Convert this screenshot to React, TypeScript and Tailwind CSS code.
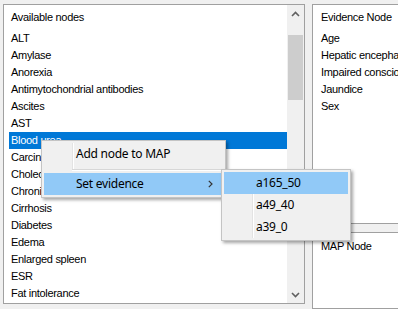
const nodes = [
  "ALT",
  "Amylase",
  "Anorexia",
  "Antimytochondrial antibodies",
  "Ascites",
  "AST",
  "Blood urea",
  "Carcinoma",
  "Cholecystitis",
  "Chronic hepatitis",
  "Cirrhosis",
  "Diabetes",
  "Edema",
  "Enlarged spleen",
  "ESR",
  "Fat intolerance",
];

const evidence = ["Age", "Hepatic encephalopathy", "Impaired consciousness", "Jaundice", "Sex"];

function Chevron({ up }: { up?: boolean }) {
  return (
    <svg width="9" height="6" viewBox="0 0 9 6" className="block">
      <path
        d={up ? "M1 5 L4.5 1.5 L8 5" : "M1 1 L4.5 4.5 L8 1"}
        fill="none"
        stroke="#606060"
        strokeWidth="1.6"
      />
    </svg>
  );
}

export default function App() {
  return (
    <div className="relative w-[398px] h-[309px] overflow-hidden bg-[#f0f0f0] text-black">
      <div className="flex pt-[4px] pl-[3px] gap-[7px] h-full font-['Liberation_Sans',Arial,sans-serif] text-[11px] leading-[17px] tracking-[-0.3px]">
        {/* Left list box */}
        <div className="w-[302px] h-[300px] shrink-0 border border-[#a0a0a0] bg-white flex">
          <div className="flex-1 pl-[5px] overflow-hidden">
            <div className="pt-[4px] pb-[4px] pl-[2px]">Available nodes</div>
            {nodes.map((n) => (
              <div
                key={n}
                className={
                  n === "Blood urea"
                    ? "h-[17px] pl-[2px] bg-[#0078d7] text-white whitespace-nowrap"
                    : "h-[17px] pl-[2px] whitespace-nowrap"
                }
              >
                {n}
              </div>
            ))}
          </div>
          <div className="w-[17px] bg-[#f0f0f0] flex flex-col items-center">
            <div className="h-[17px] w-full flex items-center justify-center">
              <Chevron up />
            </div>
            <div className="h-[13px]" />
            <div className="w-[15px] h-[65px] bg-[#cdcdcd]" />
            <div className="flex-1" />
            <div className="h-[17px] w-full flex items-center justify-center">
              <Chevron />
            </div>
          </div>
        </div>

        {/* Right column */}
        <div className="w-[100px] shrink-0 flex flex-col">
          <div className="h-[220px] border border-[#a0a0a0] bg-white pl-[8px] overflow-hidden">
            <div className="pt-[4px] pb-[4px] whitespace-nowrap">Evidence Node</div>
            {evidence.map((e) => (
              <div key={e} className="h-[17px] whitespace-nowrap">
                {e}
              </div>
            ))}
          </div>
          <div className="mt-[8px] flex-1 border border-[#a0a0a0] bg-white pl-[8px]">
            <div className="pt-[5px] whitespace-nowrap">MAP Node</div>
          </div>
        </div>
      </div>

      {/* Context menu */}
      <div className="absolute left-[41px] top-[140px] w-[185px] border border-[#c4c4c4] bg-[#f0f0f0] p-[2px] shadow-[2px_2px_3px_rgba(0,0,0,0.35)] font-['Noto_Sans',sans-serif] text-[12px] tracking-[-0.25px]">
        <div className="relative h-[22px] flex items-center pl-[32px]">
          <div className="absolute left-[28px] top-0 bottom-0 w-[1px] bg-[#e3e3e3]" />
          <div className="absolute left-[29px] top-0 bottom-0 w-[1px] bg-white" />
          <span>Add node to MAP</span>
        </div>
        <div className="relative h-[8px]">
          <div className="absolute left-[28px] top-0 h-[4px] w-[1px] bg-[#e3e3e3]" />
          <div className="absolute left-[29px] top-0 h-[4px] w-[1px] bg-white" />
          <div className="absolute left-[28px] right-0 top-[4px] h-[1px] bg-[#d7d7d7]" />
          <div className="absolute left-[28px] right-0 top-[5px] h-[1px] bg-white" />
        </div>
        <div className="h-[22px] flex items-center pl-[32px] pr-[10px] bg-[#91c9f7]">
          <span className="flex-1">Set evidence</span>
          <svg width="5" height="8" viewBox="0 0 5 8" className="block">
            <path d="M0.8 0.8 L4 4 L0.8 7.2" fill="none" stroke="#333333" strokeWidth="1.2" />
          </svg>
        </div>
      </div>

      {/* Submenu */}
      <div className="absolute left-[221px] top-[169px] w-[130px] border border-[#c4c4c4] bg-[#f0f0f0] p-[2px] shadow-[2px_2px_3px_rgba(0,0,0,0.35)] font-['Noto_Sans',sans-serif] text-[12px] tracking-[-0.25px]">
        <div className="h-[22px] flex items-center pl-[32px] bg-[#91c9f7]">a165_50</div>
        <div className="relative h-[22px] flex items-center pl-[32px]">
          <div className="absolute left-[28px] top-0 bottom-0 w-[1px] bg-[#e3e3e3]" />
          <div className="absolute left-[29px] top-0 bottom-0 w-[1px] bg-white" />
          a49_40
        </div>
        <div className="relative h-[22px] flex items-center pl-[32px]">
          <div className="absolute left-[28px] top-0 bottom-0 w-[1px] bg-[#e3e3e3]" />
          <div className="absolute left-[29px] top-0 bottom-0 w-[1px] bg-white" />
          a39_0
        </div>
      </div>
    </div>
  );
}
